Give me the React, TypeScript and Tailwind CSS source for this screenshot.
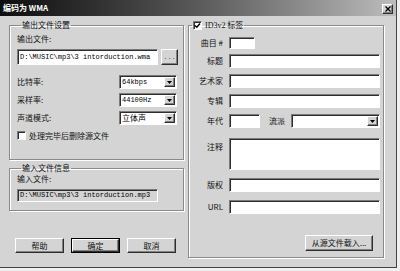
import React from "react";

const cjk = { fontFamily: '"Noto Sans CJK SC", "Noto Sans", sans-serif' };
const mono = { fontFamily: '"Liberation Mono", "DejaVu Sans Mono", monospace' };
const serif = { fontFamily: '"Liberation Serif", "DejaVu Serif", serif' };

const sunken =
  "border border-t-[#7a7a7a] border-l-[#7a7a7a] border-r-white border-b-white shadow-[inset_1px_1px_0_#2e2e2e]";
const raised =
  "border border-t-white border-l-white border-r-[#2e2e2e] border-b-[#2e2e2e] shadow-[inset_-1px_-1px_0_#808080]";

function TextBox({ w, h = 14, gray = false, children }: { w: number; h?: number; gray?: boolean; children?: React.ReactNode }) {
  return (
    <div
      className={`${sunken} ${gray ? "bg-[#d4d4d4]" : "bg-white"} flex items-center pl-[2px] overflow-hidden text-[7px] text-[#000] whitespace-nowrap`}
      style={{ width: w, height: h, ...mono }}
    >
      {children}
    </div>
  );
}

function Select({ w, value, latin }: { w: number; value?: string; latin?: boolean }) {
  return (
    <div className={`${sunken} bg-white flex items-center h-[14px]`} style={{ width: w }}>
      <span
        className={`pl-[2px] ${latin ? "text-[7px]" : "text-[8px]"} leading-[10px] text-[#000] whitespace-nowrap`}
        style={latin ? mono : cjk}
      >
        {value}
      </span>
      <div className={`${raised} ml-auto bg-[#d4d4d4] w-[11px] h-[10px] mr-[1px] flex items-center justify-center`}>
        <svg width="5" height="3" viewBox="0 0 5 3">
          <path d="M0 0H5L2.5 3Z" fill="#000" />
        </svg>
      </div>
    </div>
  );
}

function Button({ w, h = 15, label, def = false }: { w: number; h?: number; label: string; def?: boolean }) {
  return (
    <div className={def ? "border border-black" : ""}>
      <div
        className={`${raised} bg-[#d4d4d4] flex items-center justify-center text-[8px] leading-[10px] text-[#111]`}
        style={{ width: def ? w - 2 : w, height: def ? h - 2 : h, ...cjk }}
      >
        {label}
      </div>
    </div>
  );
}

function RightRow({ label, mt, children }: { label: string; mt: string; children: React.ReactNode }) {
  return (
    <div className={`flex items-center ${mt}`}>
      <div className="w-[34px] text-right text-[8px] leading-[10px] text-[#111] whitespace-nowrap" style={cjk}>
        {label}
      </div>
      <div className="ml-[6px] flex items-center">{children}</div>
    </div>
  );
}

export default function App() {
  return (
    <div className="w-[400px] h-[271px] bg-[#f0f0f0] overflow-hidden antialiased">
      <div className="w-[397px] h-[268px] bg-[#d4d4d4] border-r border-b border-[#444] flex flex-col">
        {/* Title bar */}
        <div className="h-[16px] flex items-center bg-gradient-to-r from-[#0e0e0e] via-[#5a5a5a] to-[#bdbdbd] pl-[3px] pr-[3px]">
          <div className="text-white font-bold text-[8px] leading-[10px] whitespace-nowrap" style={cjk}>
            编码为 WMA
          </div>
          <div className="ml-auto mt-[2px]">
            <div className={`${raised} bg-[#d4d4d4] w-[11px] h-[10px] flex items-center justify-center`}>
              <svg width="6" height="6" viewBox="0 0 6 6">
                <path d="M0.5 0.5L5.5 5.5M5.5 0.5L0.5 5.5" stroke="#000" strokeWidth="1.3" />
              </svg>
            </div>
          </div>
        </div>

        {/* Body */}
        <div className="flex pt-[4px] pl-[9px]">
          {/* Left column */}
          <div className="w-[175px] flex flex-col">
            <fieldset className="h-[140px] border border-[#8a8a8a] shadow-[inset_1px_1px_0_#fff,1px_1px_0_#fff] pl-[7px] flex flex-col">
              <legend className="ml-[4px] px-[1px] text-[8px] leading-[10px] text-[#111]" style={cjk}>
                输出文件设置
              </legend>
              <div className="mt-[4px] text-[8px] leading-[10px] text-[#111]" style={cjk}>输出文件:</div>
              <div className="mt-[5px] flex items-center">
                <TextBox w={141} h={16}>D:\MUSIC\mp3\3 intorduction.wma</TextBox>
                <div className="ml-[3px]">
                  <div className={`${raised} bg-[#d4d4d4] w-[17px] h-[16px] flex items-center justify-center text-[7px] text-[#555]`} style={mono}>
                    ...
                  </div>
                </div>
              </div>
              <div className="mt-[10px] flex items-center">
                <div className="w-[102px] text-[8px] leading-[10px] text-[#111]" style={cjk}>比特率:</div>
                <Select w={58} value="64kbps" latin />
              </div>
              <div className="mt-[4px] flex items-center">
                <div className="w-[102px] text-[8px] leading-[10px] text-[#111]" style={cjk}>采样率:</div>
                <Select w={58} value="44100Hz" latin />
              </div>
              <div className="mt-[4px] flex items-center">
                <div className="w-[102px] text-[8px] leading-[10px] text-[#111]" style={cjk}>声道模式:</div>
                <Select w={58} value="立体声" />
              </div>
              <div className="mt-[5px] flex items-center h-[11px]">
                <div className={`${sunken} bg-white w-[9px] h-[9px]`} />
                <div className="ml-[3px] text-[8px] leading-[10px] text-[#111]" style={cjk}>处理完毕后删除源文件</div>
              </div>
            </fieldset>

            <fieldset className="mt-[3px] h-[48px] border border-[#8a8a8a] shadow-[inset_1px_1px_0_#fff,1px_1px_0_#fff] pl-[7px] flex flex-col">
              <legend className="ml-[4px] px-[1px] text-[8px] leading-[10px] text-[#111]" style={cjk}>
                输入文件信息
              </legend>
              <div className="mt-[1px] text-[8px] leading-[10px] text-[#111]" style={cjk}>输入文件:</div>
              <div className="mt-[5px]">
                <TextBox w={141} h={13} gray>D:\MUSIC\mp3\3 intorduction.mp3</TextBox>
              </div>
            </fieldset>

            <div className="mt-[27px] ml-[6px] flex gap-[7px]">
              <Button w={49} label="帮助" />
              <Button w={49} label="确定" def />
              <Button w={49} label="取消" />
            </div>
          </div>

          {/* Right column */}
          <fieldset className="ml-[4px] w-[196px] h-[238px] border border-[#8a8a8a] shadow-[inset_1px_1px_0_#fff,1px_1px_0_#fff] flex flex-col">
            <legend className="ml-[3px] px-[1px] flex items-center">
              <div className={`${sunken} bg-white w-[9px] h-[9px] flex items-center justify-center`}>
                <svg width="7" height="7" viewBox="0 0 7 7">
                  <path d="M1 3.5L2.8 5.3L6 1.5" stroke="#000" strokeWidth="1.4" fill="none" />
                </svg>
              </div>
              <span className="ml-[3px] text-[8px] leading-[10px] text-[#111]" style={cjk}>
                <span style={serif}>ID3v2</span> 标签
              </span>
            </legend>

            <RightRow label="曲目 #" mt="mt-[6px]">
              <TextBox w={26} h={12} />
            </RightRow>
            <RightRow label="标题" mt="mt-[5px]">
              <TextBox w={151} />
            </RightRow>
            <RightRow label="艺术家" mt="mt-[6px]">
              <TextBox w={151} />
            </RightRow>
            <RightRow label="专辑" mt="mt-[6px]">
              <TextBox w={151} />
            </RightRow>
            <RightRow label="年代" mt="mt-[6px]">
              <TextBox w={31} />
              <div className="ml-[9px] w-[16px] text-[8px] leading-[10px] text-[#111] whitespace-nowrap" style={cjk}>流派</div>
              <div className="ml-[6px]">
                <Select w={89} />
              </div>
            </RightRow>
            <div className="flex items-start mt-[10px]">
              <div className="w-[34px] text-right text-[8px] leading-[10px] text-[#111] mt-[4px]" style={cjk}>注释</div>
              <div className="ml-[6px]">
                <TextBox w={151} h={32} />
              </div>
            </div>
            <RightRow label="版权" mt="mt-[8px]">
              <TextBox w={151} />
            </RightRow>
            <RightRow label="URL" mt="mt-[8px]">
              <TextBox w={151} />
            </RightRow>
            <div className="mt-[21px] self-end mr-[10px]">
              <Button w={68} h={16} label="从源文件载入..." />
            </div>
          </fieldset>
        </div>
      </div>
    </div>
  );
}
